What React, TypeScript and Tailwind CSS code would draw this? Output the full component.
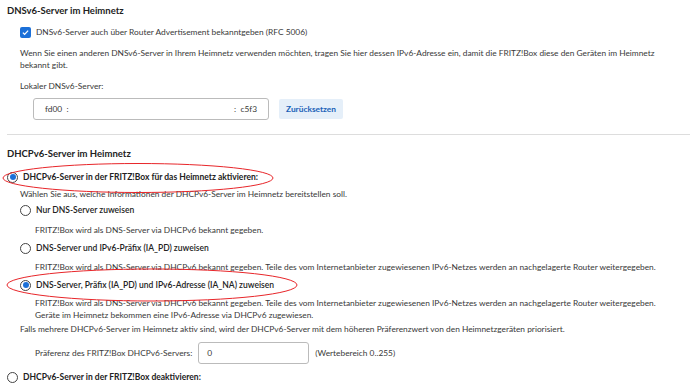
import React from 'react';

const font = { fontFamily: 'Lato, "Liberation Sans", sans-serif' };

function Radio({ checked }: { checked?: boolean }) {
  return (
    <span className="flex h-[11px] w-[11px] shrink-0 items-center justify-center rounded-full border border-[#444] bg-white">
      {checked && <span className="h-[6px] w-[6px] rounded-full bg-[#1c70d8]" />}
    </span>
  );
}

function RadioRow({ checked, label, bold }: { checked?: boolean; label: string; bold?: boolean }) {
  return (
    <div className="flex h-[12px] items-center gap-[5px]">
      <Radio checked={checked} />
      <span className={bold ? 'text-[8.5px] font-bold text-[#222]' : 'text-[8.5px] font-semibold text-[#222]'}>{label}</span>
    </div>
  );
}

export default function App() {
  return (
    <div className="relative h-[387px] w-[690px] overflow-hidden bg-white text-[8.35px] leading-[12px] text-[#383838]" style={font}>
      {/* DNSv6 section */}
      <div className="px-[7px] pt-[5px]">
        <h2 className="text-[9.5px] font-bold text-[#222]">DNSv6-Server im Heimnetz</h2>
        <div className="pl-[13px]">
          <div className="mt-[9px] flex h-[12px] items-center gap-[5px]">
            <span className="flex h-[11px] w-[11px] items-center justify-center rounded-[2px] bg-[#1c70d8]">
              <svg viewBox="0 0 12 12" className="h-[9px] w-[9px]">
                <path d="M2.5 6.2l2.3 2.3 4.7-5" fill="none" stroke="white" strokeWidth="1.7" />
              </svg>
            </span>
            <span>DNSv6-Server auch über Router Advertisement bekanntgeben (RFC 5006)</span>
          </div>
          <p className="mt-[9px]">
            Wenn Sie einen anderen DNSv6-Server in Ihrem Heimnetz verwenden möchten, tragen Sie hier dessen IPv6-Adresse ein, damit die FRITZ!Box diese den Geräten im Heimnetz
            <br />
            bekannt gibt.
          </p>
          <p className="mt-[9px]">Lokaler DNSv6-Server:</p>
          <div className="mt-[6px] flex items-center gap-[10px] pl-[13px]">
            <div className="flex h-[22px] w-[236px] items-center justify-between rounded-[3px] border border-[#bbb] px-[11px]">
              <span>fd00 &nbsp;:</span>
              <span>: &nbsp;c5f3</span>
            </div>
            <button className="h-[20px] w-[64px] rounded-[2px] bg-[#e5eff9] font-bold text-[#1a62b8]">Zurücksetzen</button>
          </div>
        </div>
      </div>

      <div className="ml-[7px] mt-[14px] border-t border-[#ddd]" />

      {/* DHCPv6 section */}
      <div className="px-[7px] pt-[13px]">
        <h2 className="text-[9.5px] font-bold text-[#222]">DHCPv6-Server im Heimnetz</h2>
        <div className="mt-[11px]">
          <RadioRow checked bold label="DHCPv6-Server in der FRITZ!Box für das Heimnetz aktivieren:" />
        </div>
        <div className="pl-[13px]">
          <p className="mt-[5px]">Wählen Sie aus, welche Informationen der DHCPv6-Server im Heimnetz bereitstellen soll.</p>
          <div className="mt-[4px]">
            <RadioRow label="Nur DNS-Server zuweisen" />
          </div>
          <p className="mt-[8px] pl-[15px]">FRITZ!Box wird als DNS-Server via DHCPv6 bekannt gegeben.</p>
          <div className="mt-[6px]">
            <RadioRow label="DNS-Server und IPv6-Präfix (IA_PD) zuweisen" />
          </div>
          <p className="mt-[7px] pl-[15px]">
            FRITZ!Box wird als DNS-Server via DHCPv6 bekannt gegeben. Teile des vom Internetanbieter zugewiesenen IPv6-Netzes werden an nachgelagerte Router weitergegeben.
          </p>
          <div className="mt-[6px]">
            <RadioRow checked label="DNS-Server, Präfix (IA_PD) und IPv6-Adresse (IA_NA) zuweisen" />
          </div>
          <p className="mt-[6px] pl-[15px]">
            FRITZ!Box wird als DNS-Server via DHCPv6 bekannt gegeben. Teile des vom Internetanbieter zugewiesenen IPv6-Netzes werden an nachgelagerte Router weitergegeben.
            <br />
            Geräte im Heimnetz bekommen eine IPv6-Adresse via DHCPv6 zugewiesen.
          </p>
          <p className="mt-[2px]">Falls mehrere DHCPv6-Server im Heimnetz aktiv sind, wird der DHCPv6-Server mit dem höheren Präferenzwert von den Heimnetzgeräten priorisiert.</p>
          <div className="mt-[7px] flex items-center pl-[15px]">
            <span>Präferenz des FRITZ!Box DHCPv6-Servers:</span>
            <div className="ml-[6px] flex h-[22px] w-[111px] items-center rounded-[3px] border border-[#bbb] px-[8px]">0</div>
            <span className="ml-[6px]">(Wertebereich 0..255)</span>
          </div>
        </div>
        <div className="mt-[7px]">
          <RadioRow bold label="DHCPv6-Server in der FRITZ!Box deaktivieren:" />
        </div>
      </div>

      {/* red annotation ellipses */}
      <svg className="pointer-events-none absolute left-0 top-0" width="690" height="387">
        <ellipse cx="138" cy="178" rx="135" ry="14.5" fill="none" stroke="#e8262a" strokeWidth="1" />
        <ellipse cx="152" cy="285" rx="145" ry="16" fill="none" stroke="#e8262a" strokeWidth="1" />
      </svg>
    </div>
  );
}
